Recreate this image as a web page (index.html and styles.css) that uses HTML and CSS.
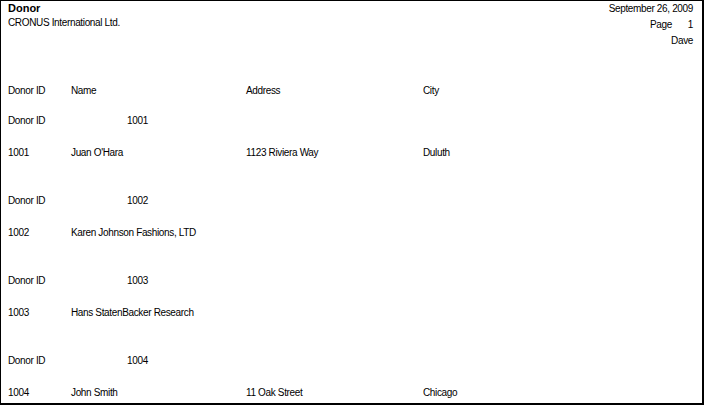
FILE: index.html
```html
<!DOCTYPE html>
<html>
<head>
<meta charset="utf-8">
<title>Donor</title>
<link rel="stylesheet" href="styles.css">
</head>
<body>
<div class="page">
  <div class="top">
    <div class="top-left">
      <div class="title">Donor</div>
      <div class="line company">CRONUS International Ltd.</div>
    </div>
    <div class="top-right">
      <div class="line">September 26, 2009</div>
      <div class="line page-no"><span>Page</span><span class="num">1</span></div>
      <div class="line">Dave</div>
    </div>
  </div>

  <div class="row colhead">
    <div>Donor ID</div><div>Name</div><div>Address</div><div>City</div>
  </div>

  <div class="group"><div>Donor ID</div><div>1001</div></div>
  <div class="row detail"><div>1001</div><div>Juan O'Hara</div><div>1123 Riviera Way</div><div>Duluth</div></div>

  <div class="group"><div>Donor ID</div><div>1002</div></div>
  <div class="row detail"><div>1002</div><div>Karen Johnson Fashions, LTD</div><div></div><div></div></div>

  <div class="group"><div>Donor ID</div><div>1003</div></div>
  <div class="row detail"><div>1003</div><div>Hans StatenBacker Research</div><div></div><div></div></div>

  <div class="group"><div>Donor ID</div><div>1004</div></div>
  <div class="row detail"><div>1004</div><div>John Smith</div><div>11 Oak Street</div><div>Chicago</div></div>
</div>
</body>
</html>
```

FILE: styles.css
```css
html, body {
  margin: 0;
  padding: 0;
  background: #fff;
}

.page {
  box-sizing: border-box;
  width: 704px;
  height: 405px;
  overflow: hidden;
  border-top: 1px solid #000;
  border-left: 1px solid #000;
  border-right: 2px solid #000;
  border-bottom: 2px solid #000;
  padding: 0 9px 0 7px;
  font-family: "Liberation Sans", Arial, sans-serif;
  font-size: 10px;
  letter-spacing: -0.35px;
  line-height: 16px;
  color: #000;
}

.top {
  display: flex;
  justify-content: space-between;
  height: 82px;
}

.title {
  font-weight: bold;
  font-size: 11px;
  letter-spacing: 0;
  height: 15px;
  margin-top: -1px;
}

.line {
  height: 16px;
  white-space: nowrap;
}

.top-right {
  display: flex;
  flex-direction: column;
  align-items: flex-end;
}

.page-no {
  display: flex;
}

.page-no .num {
  width: 21px;
  text-align: right;
}

.row {
  display: grid;
  grid-template-columns: 63px 175px 177px 1fr;
  white-space: nowrap;
}

.colhead {
  height: 30px;
}

.group {
  display: grid;
  grid-template-columns: 119px 1fr;
  height: 32px;
}

.detail {
  height: 48px;
}
```
